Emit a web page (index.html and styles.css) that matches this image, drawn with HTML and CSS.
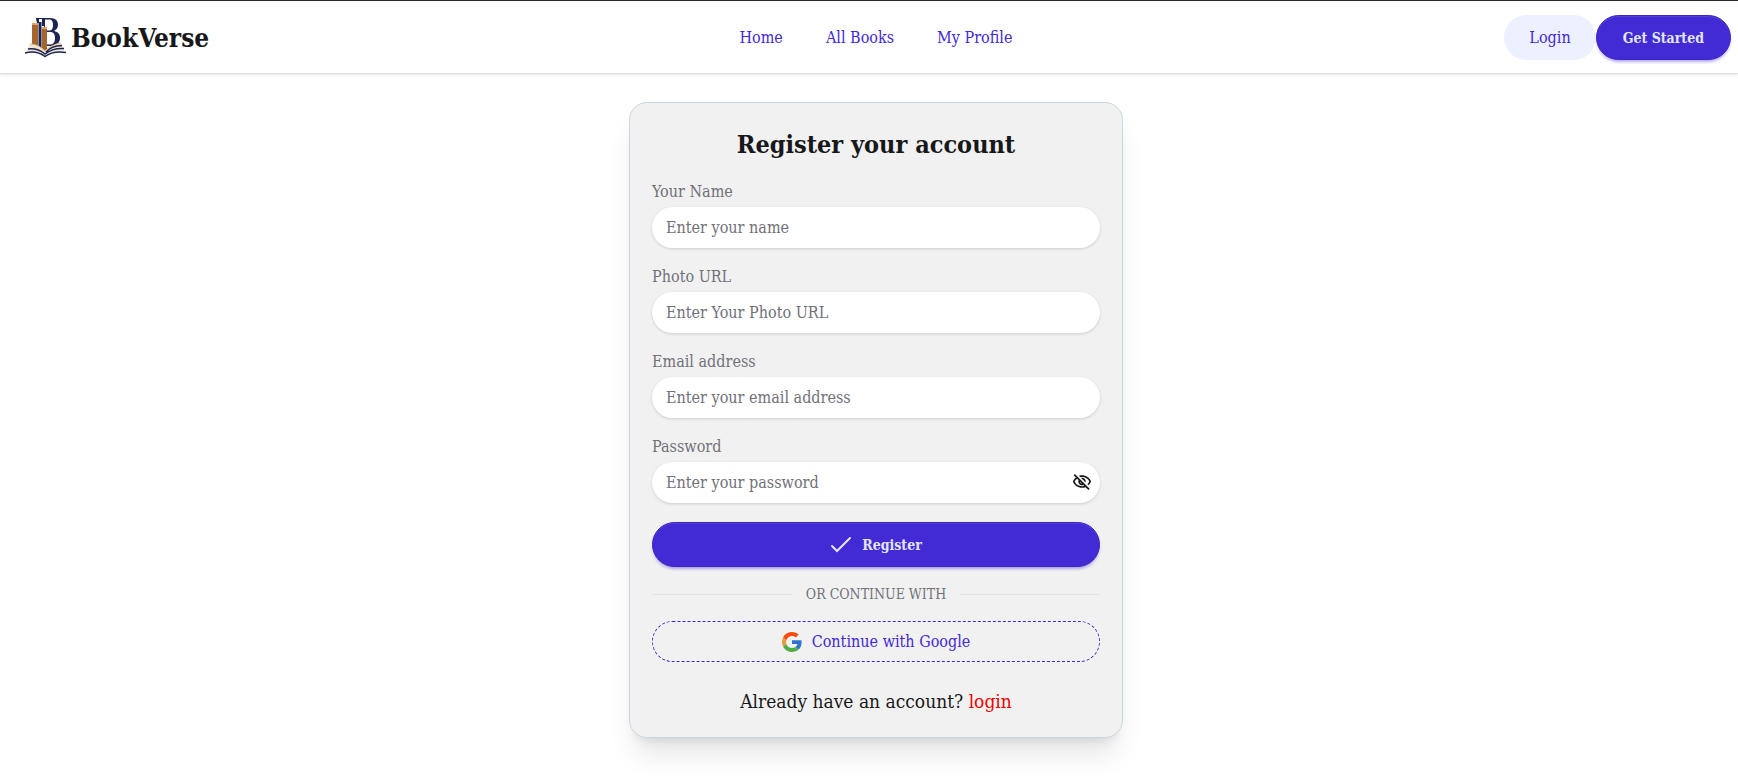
FILE: index.html
```
<!DOCTYPE html>
<html lang="en">
<head>
  <meta charset="UTF-8">
  <meta name="viewport" content="width=device-width, initial-scale=1.0">
  <title>BookVerse | Register</title>
  <link rel="stylesheet" href="styles.css">
</head>
<body>
  <header class="navbar">
    <a href="#" class="brand">
      <svg class="brand-logo" viewBox="0 3 50 50" aria-hidden="true">
        <path fill="#1b2453" fill-rule="evenodd" d="M15 8h14c6 0 8 3 8 7 0 3-2 5-4 6 4 1 6 3 6 7 0 5-4 8-9 8h-7V16h-2V9h-3v4h-2l-1-4zM24 9.500v11h4c3 0 4-2 4-5.500s-1-5.500-4-5.500zM26 22v12.500h3c3 0 5-2 5-6.500s-2-6-5-6z"/>
        <path fill="#1b2453" d="M17.500 12h3v30l-3-3z"/>
        <path fill="#a5652f" d="M11 14h6v24l-6-3zM21 18h5v22l-3 2-2-2z"/>
        <path fill="#dba466" d="M11 13h6v2h-6zM21 17h5v2h-5z"/>
        <path fill="#efe6d5" d="M9 34c6 0 11 3 15 7 4-4 9-7 16-8l4 8c-8-1-14 1-20 5-6-4-12-5-19-4z"/>
        <path fill="none" stroke="#e0b77a" stroke-width="1" d="M9 34c6 0 11 3 15 7 4-4 9-7 16-8"/>
        <path fill="none" stroke="#1b2453" stroke-width="1.500" d="M4 43c8-2 14-1 20 3.500 6-4.500 12-5.500 21-4M7 39c7-1 12 1 17 5 5-4 11-6 19-5.500M25 42c5-5 9-6 16-6.500"/>
      </svg>
      <span>BookVerse</span>
    </a>
    <nav class="nav-links">
      <a href="#">Home</a>
      <a href="#">All Books</a>
      <a href="#">My Profile</a>
    </nav>
    <div class="nav-actions">
      <a href="#" class="btn btn-soft">Login</a>
      <a href="#" class="btn btn-primary">Get Started</a>
    </div>
  </header>

  <main class="page">
    <section class="card">
      <h1>Register your account</h1>
      <form>
        <div class="field">
          <label for="name">Your Name</label>
          <input type="text" id="name" placeholder="Enter your name">
        </div>
        <div class="field">
          <label for="photo">Photo URL</label>
          <input type="text" id="photo" placeholder="Enter Your Photo URL">
        </div>
        <div class="field">
          <label for="email">Email address</label>
          <input type="email" id="email" placeholder="Enter your email address">
        </div>
        <div class="field">
          <label for="password">Password</label>
          <div class="password-wrap">
            <input type="password" id="password" placeholder="Enter your password">
            <button type="button" class="toggle-password" aria-label="Show password">
              <svg viewBox="0 0 24 24" aria-hidden="true">
                <path fill="currentColor" d="M12 6a9.77 9.77 0 0 1 8.82 5.5 9.65 9.65 0 0 1-2.41 3.12l1.41 1.41c1.39-1.23 2.49-2.77 3.18-4.53C21.27 7.11 17 4 12 4c-1.27 0-2.49.2-3.64.57l1.65 1.65C10.66 6.09 11.32 6 12 6zm-1.07 1.14L13 9.21c.57.25 1.03.71 1.28 1.28l2.07 2.07c.08-.34.14-.7.14-1.07C16.5 9.01 14.48 7 12 7c-.37 0-.72.05-1.07.14zM2.01 3.87l2.68 2.68A11.738 11.738 0 0 0 1 11.5C2.73 15.89 7 19 12 19c1.52 0 2.98-.29 4.32-.82l3.42 3.42 1.41-1.41L3.42 2.45 2.01 3.87zm7.5 7.5 2.61 2.61c-.04.01-.08.02-.12.02a2.5 2.5 0 0 1-2.5-2.5c0-.05.01-.08.01-.13zm-3.4-3.4 1.75 1.75a4.6 4.6 0 0 0-.36 1.78 4.507 4.507 0 0 0 6.27 4.14l.98.98c-.88.24-1.8.38-2.75.38a9.77 9.77 0 0 1-8.82-5.5c.7-1.43 1.72-2.61 2.93-3.53z"/>
              </svg>
            </button>
          </div>
        </div>
        <button type="submit" class="btn btn-primary btn-block">
          <svg class="check-icon" viewBox="0 0 22 22" aria-hidden="true">
            <path d="M2 12l5 5L20 4" fill="none" stroke="currentColor" stroke-width="2" stroke-linecap="round"/>
          </svg>
          Register
        </button>
        <div class="divider">OR CONTINUE WITH</div>
        <button type="button" class="btn-google">
          <svg class="google-icon" viewBox="0 0 48 48" aria-hidden="true">
            <path fill="#e89a3f" d="M10.5 28.600a14 14 0 0 1 0-9.200L2.600 13.200a24 24 0 0 0 0 21.600z"/>
            <path fill="#fb4b0a" d="M24 9.500c3.540 0 6.710 1.220 9.210 3.600l6.850-6.850C35.900 2.380 30.470 0 24 0 14.620 0 6.510 5.380 2.560 13.220l7.980 6.190C12.430 13.720 17.740 9.500 24 9.500z"/>
            <path fill="#2e74cc" d="M46.980 24.550c0-1.570-.15-3.090-.38-4.550H24v9.020h12.940c-.58 2.960-2.260 5.480-4.780 7.180l7.730 6c4.510-4.180 7.090-10.360 7.090-17.650z"/>
            <path fill="#53ad45" d="M24 48c6.480 0 11.930-2.130 15.890-5.810l-7.730-6c-2.150 1.450-4.920 2.300-8.160 2.300-6.260 0-11.570-4.220-13.470-9.910l-7.980 6.190C6.510 42.620 14.620 48 24 48z"/>
          </svg>
          Continue with Google
        </button>
      </form>
      <p class="switch">Already have an account? <a href="#">login</a></p>
    </section>
  </main>
</body>
</html>
```
FILE: styles.css
```
* {
  box-sizing: border-box;
}
body {
  margin: 0;
  font-family: "Roboto Slab", "DejaVu Serif Condensed", "DejaVu Serif", serif;
  font-size: 16px;
  line-height: 24px;
  color: #18181b;
  background: #fff;
}
a {
  color: inherit;
  text-decoration: none;
}
input, button {
  font: inherit;
}
.navbar {
  display: grid;
  grid-template-columns: 1fr auto 1fr;
  align-items: center;
  padding: 14px 7px 13px 21px;
  border-top: 1px solid #29292d;
  border-bottom: 1px solid #e0e0e0;
  box-shadow: 0 1px 3px rgba(0, 0, 0, 0.1);
}
.brand {
  display: flex;
  align-items: center;
  font-size: 26px;
  font-weight: 700;
}
.brand-logo {
  width: 50px;
  height: 50px;
  margin: -3px 0;
}
.nav-links {
  display: flex;
  gap: 43px;
  font-weight: 500;
  color: #422ad5;
}
.nav-actions {
  display: flex;
  justify-content: flex-end;
}
.btn {
  display: flex;
  align-items: center;
  justify-content: center;
  gap: 10px;
  height: 45px;
  padding: 0 24px;
  border: 1px solid transparent;
  border-radius: 23px;
  cursor: pointer;
}
.btn-soft {
  background: #edf0ff;
  color: #422ad5;
  font-weight: 500;
}
.btn-primary {
  padding: 0 26px;
  background: #422ad5;
  border-color: #3b25c0;
  color: #e0e7ff;
  font-size: 14px;
  font-weight: 700;
  box-shadow: inset 0 1px 0 rgba(255, 255, 255, 0.1), 0 3px 3px -1px rgba(66, 42, 213, 0.4);
}
.page {
  display: flex;
  justify-content: center;
  padding: 28px 7px 40px 21px;
}
.card {
  width: 100%;
  max-width: 494px;
  padding: 24px 22px 22px;
  border: 1px solid #cbd5e1;
  border-radius: 18px;
  background: #f1f1f1;
  box-shadow: 0 22px 28px -6px rgba(0, 0, 0, 0.1), 0 9px 11px -7px rgba(0, 0, 0, 0.1);
}
h1 {
  margin: 0 0 17px;
  font-size: 25px;
  line-height: 36px;
  font-weight: 600;
  text-align: center;
}
.field {
  margin-bottom: 17px;
}
.field label {
  display: block;
  margin-bottom: 3px;
  color: #71717a;
  font-weight: 500;
}
.field input {
  display: block;
  width: 100%;
  height: 41px;
  padding: 0 14px;
  border: 0;
  border-radius: 21px;
  background: #fff;
  box-shadow: 0 1px 3px rgba(0, 0, 0, 0.15);
}
.field input::placeholder {
  color: #71717a;
}
.password-wrap {
  position: relative;
}
.toggle-password {
  position: absolute;
  top: 10px;
  right: 8px;
  padding: 0;
  border: 0;
  background: none;
  color: #18181b;
  cursor: pointer;
}
.toggle-password svg {
  display: block;
  width: 20px;
  height: 20px;
}
.btn-block {
  width: 100%;
  margin-top: 19px;
}
.check-icon {
  width: 22px;
  height: 22px;
}
.divider {
  display: flex;
  align-items: center;
  gap: 14px;
  margin: 15px 0;
  color: #71717a;
  font-size: 14px;
}
.divider::before,
.divider::after {
  content: "";
  flex: 1;
  height: 1px;
  background: #e2e2e4;
}
.btn-google {
  display: flex;
  align-items: center;
  justify-content: center;
  gap: 10px;
  width: 100%;
  height: 41px;
  border: 1px dashed #422ad5;
  border-radius: 21px;
  background: none;
  color: #422ad5;
  font-weight: 500;
  cursor: pointer;
}
.google-icon {
  width: 20px;
  height: 20px;
}
.switch {
  margin: 26px 0 0;
  font-size: 19px;
  line-height: 27px;
  font-weight: 500;
  text-align: center;
}
.switch a {
  color: #f00000;
}
```
